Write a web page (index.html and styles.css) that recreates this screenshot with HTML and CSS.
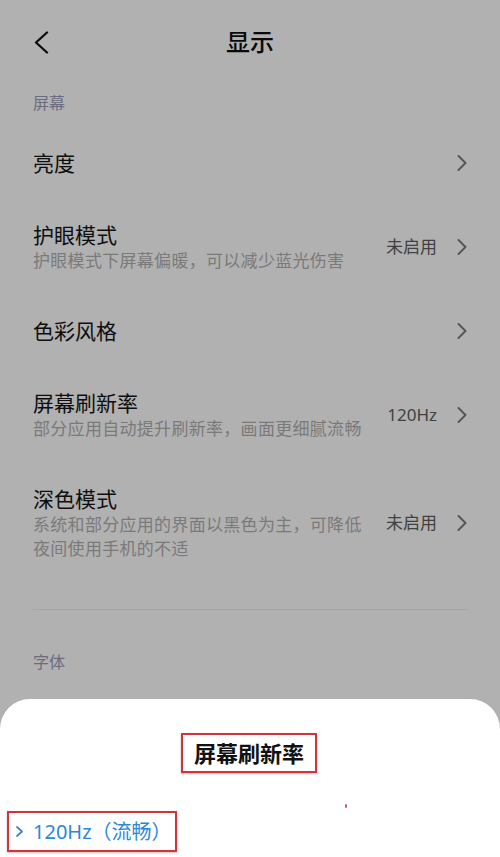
FILE: index.html
```html
<!DOCTYPE html>
<html lang="zh-CN">
<head>
<meta charset="utf-8">
<title>显示</title>
<link rel="stylesheet" href="styles.css">
</head>
<body>
<div class="screen">
  <header class="topbar">
    <div class="back">
      <svg width="16" height="23" viewBox="0 0 16 23"><polyline points="14,1.5 3,11.5 14,21.5" fill="none" stroke="#0b0b0b" stroke-width="2.3" stroke-linecap="round" stroke-linejoin="round"/></svg>
    </div>
    <h1 class="title">显示</h1>
    <div></div>
  </header>

  <div class="section-label">屏幕</div>

  <div class="list">
    <div class="row">
      <div class="row-text"><div class="row-title">亮度</div></div>
      <div class="row-right">
        <svg class="chev" width="10" height="16" viewBox="0 0 10 16"><polyline points="1.5,1 8.5,8 1.5,15" fill="none" stroke="#555" stroke-width="1.9" stroke-linecap="round" stroke-linejoin="round"/></svg>
      </div>
    </div>
    <div class="row">
      <div class="row-text">
        <div class="row-title">护眼模式</div>
        <div class="row-sub">护眼模式下屏幕偏暖，可以减少蓝光伤害</div>
      </div>
      <div class="row-right">
        <span class="value">未启用</span>
        <svg class="chev" width="10" height="16" viewBox="0 0 10 16"><polyline points="1.5,1 8.5,8 1.5,15" fill="none" stroke="#555" stroke-width="1.9" stroke-linecap="round" stroke-linejoin="round"/></svg>
      </div>
    </div>
    <div class="row">
      <div class="row-text"><div class="row-title">色彩风格</div></div>
      <div class="row-right">
        <svg class="chev" width="10" height="16" viewBox="0 0 10 16"><polyline points="1.5,1 8.5,8 1.5,15" fill="none" stroke="#555" stroke-width="1.9" stroke-linecap="round" stroke-linejoin="round"/></svg>
      </div>
    </div>
    <div class="row">
      <div class="row-text">
        <div class="row-title">屏幕刷新率</div>
        <div class="row-sub">部分应用自动提升刷新率，画面更细腻流畅</div>
      </div>
      <div class="row-right">
        <span class="value">120Hz</span>
        <svg class="chev" width="10" height="16" viewBox="0 0 10 16"><polyline points="1.5,1 8.5,8 1.5,15" fill="none" stroke="#555" stroke-width="1.9" stroke-linecap="round" stroke-linejoin="round"/></svg>
      </div>
    </div>
    <div class="row">
      <div class="row-text">
        <div class="row-title">深色模式</div>
        <div class="row-sub">系统和部分应用的界面以黑色为主，可降低夜间使用手机的不适</div>
      </div>
      <div class="row-right">
        <span class="value">未启用</span>
        <svg class="chev" width="10" height="16" viewBox="0 0 10 16"><polyline points="1.5,1 8.5,8 1.5,15" fill="none" stroke="#555" stroke-width="1.9" stroke-linecap="round" stroke-linejoin="round"/></svg>
      </div>
    </div>
  </div>

  <div class="divider"></div>
  <div class="section-label second">字体</div>

  <div class="sheet">
    <div class="sheet-head">
      <div class="sheet-title">屏幕刷新率</div>
    </div>
    <div class="option">
      <svg class="opt-chev" width="7" height="11" viewBox="0 0 7 11"><polyline points="1,1 6,5.5 1,10" fill="none" stroke="#2b88d6" stroke-width="1.7" stroke-linecap="round" stroke-linejoin="round"/></svg>
      <span class="opt-text">120Hz（流畅）</span>
    </div>
    <span class="dot"></span>
  </div>
</div>
</body>
</html>
```
FILE: styles.css
```css
html, body {
  margin: 0;
  padding: 0;
}
body {
  background: #b1b1b1;
  font-family: "Noto Sans", "Noto Sans CJK SC", sans-serif;
  color: #0e0e0e;
}
.screen {
  position: relative;
  width: 500px;
  height: 857px;
  overflow: hidden;
}
.topbar {
  height: 84px;
  display: grid;
  grid-template-columns: 1fr auto 1fr;
  align-items: center;
}
.back {
  padding-left: 33px;
  display: flex;
  align-items: center;
}
.title {
  margin: 0;
  font-size: 24px;
  font-weight: 500;
  line-height: 30px;
  color: #0a0a0a;
}
.section-label {
  margin: 9px 0 14px;
  padding-left: 33px;
  font-size: 16px;
  line-height: 20px;
  color: #6c6c80;
}
.section-label.second {
  margin-top: 42px;
}
.row {
  display: flex;
  align-items: center;
  padding: 22px 33px;
}
.row-text {
  flex: 1;
  min-width: 0;
}
.row-title {
  font-size: 21px;
  line-height: 28px;
  color: #0e0e0e;
}
.row-sub {
  font-size: 17px;
  line-height: 24px;
  letter-spacing: 0.3px;
  color: #7a7a7a;
}
.row-right {
  flex-shrink: 0;
  display: flex;
  align-items: center;
  gap: 20px;
  margin-left: 20px;
}
.value {
  font-size: 17px;
  line-height: 24px;
  color: #414141;
}
.chev {
  display: block;
}
.divider {
  margin: 26px 33px 0;
  height: 1px;
  background: #a4a4a4;
}
.sheet {
  position: absolute;
  left: 0;
  right: 0;
  top: 699px;
  bottom: 0;
  background: #ffffff;
  border-radius: 30px 30px 0 0;
  padding-top: 34px;
}
.sheet-head {
  display: flex;
  justify-content: center;
}
.sheet-title {
  border: 2px solid #d2343a;
  padding: 7px 11px;
  font-size: 22px;
  line-height: 22px;
  font-weight: 700;
  color: #111111;
  box-shadow: 0 1px 2px rgba(0, 0, 0, 0.25);
  margin-left: -2px;
}
.option {
  display: inline-flex;
  align-items: center;
  margin: 38px 0 0 7px;
  height: 37px;
  padding: 0 3px 0 7px;
  border: 2px solid #d2343a;
  box-shadow: 0 1px 2px rgba(0, 0, 0, 0.25);
  color: #2b88d6;
}
.opt-chev {
  display: block;
  margin-right: 10px;
}
.opt-text {
  font-size: 20px;
  line-height: 24px;
}
.dot {
  position: absolute;
  left: 345px;
  top: 105px;
  width: 2px;
  height: 4px;
  background: #c0666a;
  border-radius: 1px;
}
```
